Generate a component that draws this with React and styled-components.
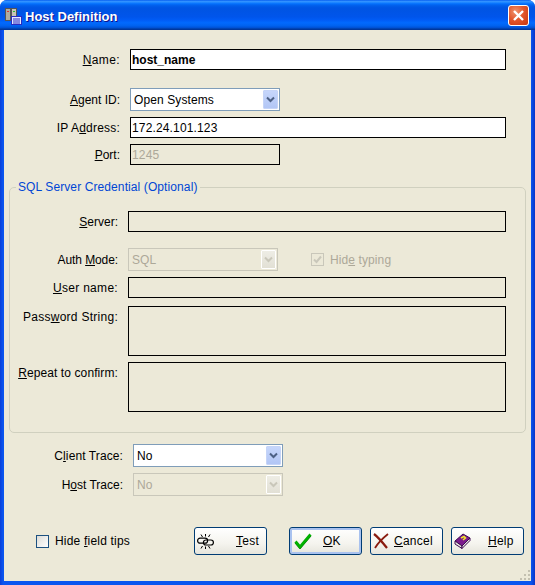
import styled, { createGlobalStyle } from 'styled-components'

const Global = createGlobalStyle`
  html, body {
    margin: 0;
    padding: 0;
    background: #fff;
  }
  * {
    box-sizing: border-box;
  }
`

const Window = styled.div`
  position: relative;
  width: 535px;
  height: 585px;
  display: flex;
  flex-direction: column;
  border-radius: 7px 7px 0 0;
  overflow: hidden;
  background: linear-gradient(90deg, #0a3fd8 0, #0a55f0 3px, #0a55f0 531px, #0a35c8 535px);
  font-family: "Liberation Sans", Arial, sans-serif;
  font-size: 12px;
  color: #000;
`

const TitleBar = styled.div`
  height: 30px;
  flex: none;
  display: flex;
  align-items: center;
  padding: 2px 6px 0 5px;
  gap: 3px;
  background: linear-gradient(180deg, #0058ee 0%, #3593ff 4%, #288eff 7%, #127dff 10%, #036ffc 13%, #0262ee 17%, #0057e5 24%, #0054e3 30%, #0055eb 56%, #005bf5 66%, #026afe 76%, #0062ef 86%, #0052d6 92%, #0040ab 96%, #003092 100%);
`

const TitleText = styled.span`
  font-weight: bold;
  font-size: 13px;
  color: #fff;
  text-shadow: 1px 1px 0 #0f1089;
  flex: 1;
`

const CloseButton = styled.div`
  width: 21px;
  height: 21px;
  margin-top: -2px;
  margin-left: auto;
  border: 1px solid #fff;
  border-radius: 3px;
  display: flex;
  align-items: center;
  justify-content: center;
  background: radial-gradient(circle at 35% 30%, #f0946f 0%, #e2572d 45%, #c8360e 100%);
`

const Client = styled.div`
  position: relative;
  flex: 1;
  margin: 0 4px 4px;
  padding-top: 19px;
  background: #ece9d8;
  display: flex;
  flex-direction: column;
`

const Row = styled.div`
  display: flex;
  align-items: ${p => (p.$tall ? 'flex-start' : 'center')};
  gap: 10px;
  margin-top: ${p => p.$top || 0}px;
`

const Label = styled.label`
  flex: none;
  width: ${p => p.$width || 116}px;
  text-align: right;
  white-space: nowrap;
  letter-spacing: ${p => p.$track || 0}px;
  padding-top: ${p => (p.$tall ? 4 : 0)}px;
`

const Input = styled.input`
  display: block;
  flex: none;
  width: ${p => p.$width}px;
  height: 21px;
  padding: 0 1px;
  border: 1px solid #000;
  border-radius: 0;
  outline: none;
  font-family: inherit;
  font-size: 12px;
  font-weight: ${p => (p.$bold ? 'bold' : 'normal')};
  letter-spacing: ${p => (p.$bold ? 0 : 0.15)}px;
  color: #000;
  background: ${p => (p.disabled ? '#ece9d8' : '#fff')};

  &:disabled {
    color: #aca899;
  }
`

const TextBox = styled.div`
  flex: none;
  width: 378px;
  height: 50px;
  border: 1px solid #000;
`

const Combo = styled.div`
  flex: none;
  width: 150px;
  height: 23px;
  display: flex;
  align-items: center;
  justify-content: space-between;
  padding: 1px 1px 1px 3px;
  letter-spacing: 0.1px;
  border: 1px solid ${p => (p.$off ? '#c9c7ba' : '#7f9db9')};
  color: ${p => (p.$off ? '#aca899' : '#000')};
  background: ${p => (p.$off ? '#ece9d8' : '#fff')};
`

const ComboArrow = styled.div`
  width: 15px;
  height: 19px;
  display: flex;
  align-items: center;
  justify-content: center;
  border: 1px solid ${p => (p.$off ? '#fff' : '#c5d4f7')};
  border-radius: 1px;
  background: ${p => (p.$off
    ? 'linear-gradient(180deg, #eeede5, #e2e0d5)'
    : 'linear-gradient(180deg, #c6d6fb, #b2c6f5)')};
`

const Group = styled.fieldset`
  margin: 15px 5px 0;
  padding: 17px 19px 20px 0;
  min-width: 0;
  height: 253px;
  border: 1px solid #d0d0bf;
  border-radius: 5px;
`

const Legend = styled.legend`
  margin-left: 6px;
  padding: 0 2px;
  color: #0046d5;
  line-height: 14px;
  letter-spacing: 0.1px;
`

const CheckBox = styled.div`
  flex: none;
  width: 13px;
  height: 13px;
  display: flex;
  align-items: center;
  justify-content: center;
  border: 1px solid ${p => (p.$off ? '#c9c7ba' : '#1c5180')};
  background: ${p => (p.$off ? '#ece9d8' : 'linear-gradient(135deg, #dcdcd7, #fff)')};
`

const HideTyping = styled.div`
  display: flex;
  align-items: center;
  gap: 6px;
  margin-left: 23px;
  letter-spacing: 0.1px;
  color: #aca899;
`

const Footer = styled.div`
  display: flex;
  align-items: center;
  margin-top: 31px;
  padding: 0 7px 0 32px;
`

const HideTips = styled.div`
  display: flex;
  align-items: center;
  gap: 6px;
  margin-right: auto;
  letter-spacing: 0.2px;
`

const Button = styled.button`
  width: 73px;
  height: 28px;
  display: flex;
  align-items: center;
  gap: ${p => p.$gap}px;
  margin-left: ${p => p.$left || 8}px;
  padding: 0 0 0 ${p => (p.$main ? 4 : 2)}px;
  border: 1px solid #003c74;
  border-radius: 3px;
  font-family: inherit;
  font-size: 12px;
  letter-spacing: 0.25px;
  color: #000;
  background: linear-gradient(180deg, #fff 0%, #f5f4ee 60%, #e6e5dc 100%);
  box-shadow: ${p => (p.$main ? 'inset 0 0 0 2px #a9c2ef' : 'none')};
`

const Grip = styled.svg`
  position: absolute;
  right: 0;
  bottom: 0;
`

const AppIcon = () => (
  <svg width="17" height="17" viewBox="0 0 17 17">
    <rect x="0.5" y="0.5" width="5" height="12" fill="#b0aca0" stroke="#555" />
    <rect x="6.5" y="0.5" width="5" height="12" fill="#c8c4b8" stroke="#555" />
    <rect x="2" y="3" width="2" height="1" fill="#d33" />
    <rect x="8" y="3" width="2" height="1" fill="#3b3" />
    <rect x="6.5" y="8.5" width="10" height="8" fill="#e4e8ff" stroke="#2a2ac0" />
    <path d="M8 11h7M8 13h7M8 15h7" stroke="#2a2ac0" />
  </svg>
)

const CloseIcon = () => (
  <svg width="13" height="13" viewBox="0 0 13 13">
    <path d="M2 2l9 9M11 2l-9 9" stroke="#fff" strokeWidth="2.4" />
  </svg>
)

const Chevron = ({ off }) => (
  <svg width="9" height="7" viewBox="0 0 9 7">
    <path d="M1 1.5l3.5 3.5L8 1.5" fill="none" stroke={off ? '#c9c7ba' : '#4d6185'} strokeWidth="2" />
  </svg>
)

const SmallCheck = () => (
  <svg width="9" height="9" viewBox="0 0 9 9">
    <path d="M1 4.5l2.5 2.5L8 1.5" fill="none" stroke="#c9c7ba" strokeWidth="2" />
  </svg>
)

const ChainIcon = () => (
  <svg width="17" height="15" viewBox="0 0 17 15">
    <rect x="0.6" y="4.2" width="10" height="5" rx="2.5" fill="none" stroke="#000" strokeWidth="1.2" />
    <rect x="6.4" y="6" width="10" height="5" rx="2.5" fill="none" stroke="#000" strokeWidth="1.2" />
    <path d="M4 0.5l1.5 2.5M8.5 0v2.5M13 0.5l-1.5 2.5M4 14.5l1.5-2.5M8.5 15v-2.5M13 14.5l-1.5-2.5" stroke="#000" />
  </svg>
)

const OkIcon = () => (
  <svg width="18" height="16" viewBox="0 0 18 16">
    <path d="M1.5 9.5l4.5 5.5L16.5 2.5" fill="none" stroke="#006400" strokeWidth="2" />
    <path d="M1.5 8.5l4.5 5.5L16.5 1.5" fill="none" stroke="#00b000" strokeWidth="2.8" />
  </svg>
)

const CancelIcon = () => (
  <svg width="17" height="16" viewBox="0 0 17 16">
    <path d="M1 1c4 3 9 9 13 14" fill="none" stroke="#8a1c10" strokeWidth="2.2" />
    <path d="M15 1C10 5 5 10 2 15" fill="none" stroke="#8a1c10" strokeWidth="1.8" />
  </svg>
)

const BookIcon = () => (
  <svg width="17" height="16" viewBox="0 0 17 16">
    <path d="M1 8L9 1l7 4-8 8z" fill="#7b1a8c" stroke="#3c0a50" />
    <path d="M1 8l7 5v2.5L1 11z" fill="#e8e4e0" stroke="#3c0a50" />
    <path d="M8 13l8-8v2.5l-8 8z" fill="#e8e4e0" stroke="#3c0a50" />
    <path d="M7 5l3-1.5 1.5 1.5L9 7" fill="none" stroke="#f2e92a" strokeWidth="1.6" />
  </svg>
)

export default function App() {
  return (
    <Window>
      <Global />
      <TitleBar>
        <AppIcon />
        <TitleText>Host Definition</TitleText>
        <CloseButton><CloseIcon /></CloseButton>
      </TitleBar>
      <Client>
        <Row>
          <Label $track={0.4}><u>N</u>ame:</Label>
          <Input $width={376} $bold defaultValue="host_name" />
        </Row>
        <Row $top={18}>
          <Label><u>A</u>gent ID:</Label>
          <Combo>Open Systems<ComboArrow><Chevron /></ComboArrow></Combo>
        </Row>
        <Row $top={6}>
          <Label $track={0.2}>IP A<u>d</u>dress:</Label>
          <Input $width={376} defaultValue="172.24.101.123" />
        </Row>
        <Row $top={6}>
          <Label><u>P</u>ort:</Label>
          <Input $width={150} disabled defaultValue="1245" />
        </Row>

        <Group>
          <Legend>SQL Server Credential (Optional)</Legend>
          <Row>
            <Label $width={108}><u>S</u>erver:</Label>
            <Input $width={378} disabled />
          </Row>
          <Row $top={16}>
            <Label $width={108} $track={-0.1}>Auth <u>M</u>ode:</Label>
            <Combo $off>SQL<ComboArrow $off><Chevron off /></ComboArrow></Combo>
            <HideTyping>
              <CheckBox $off><SmallCheck /></CheckBox>
              <span>Hid<u>e</u> typing</span>
            </HideTyping>
          </Row>
          <Row $top={6}>
            <Label $width={108} $track={0.3}><u>U</u>ser name:</Label>
            <Input $width={378} disabled />
          </Row>
          <Row $top={8} $tall>
            <Label $width={108} $tall $track={0.27}>Pass<u>w</u>ord String:</Label>
            <TextBox />
          </Row>
          <Row $top={6} $tall>
            <Label $width={108} $tall $track={0.1}><u>R</u>epeat to confirm:</Label>
            <TextBox />
          </Row>
        </Group>

        <Row $top={11}>
          <Label $width={119} $track={0.1}>C<u>l</u>ient Trace:</Label>
          <Combo>No<ComboArrow><Chevron /></ComboArrow></Combo>
        </Row>
        <Row $top={6}>
          <Label $width={119}>H<u>o</u>st Trace:</Label>
          <Combo $off>No<ComboArrow $off><Chevron off /></ComboArrow></Combo>
        </Row>

        <Footer>
          <HideTips>
            <CheckBox />
            <span>Hide <u>f</u>ield tips</span>
          </HideTips>
          <Button $gap={22}><ChainIcon /><span><u>T</u>est</span></Button>
          <Button $left={22} $main $gap={11}><OkIcon /><span><u>O</u>K</span></Button>
          <Button $gap={4}><CancelIcon /><span><u>C</u>ancel</span></Button>
          <Button $gap={17}><BookIcon /><span><u>H</u>elp</span></Button>
        </Footer>

        <Grip width="11" height="11" viewBox="0 0 11 11">
          <path d="M8 0h2v2H8zM4 4h2v2H4zM8 4h2v2H8zM0 8h2v2H0zM4 8h2v2H4zM8 8h2v2H8z" fill="#c3c0b0" />
        </Grip>
      </Client>
    </Window>
  )
}
